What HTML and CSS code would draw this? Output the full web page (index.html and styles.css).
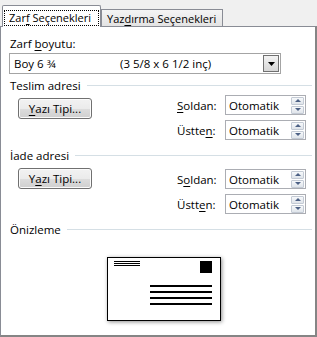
FILE: index.html
```html
<!DOCTYPE html>
<html lang="tr">
    <head>
        <meta charset="UTF-8">
        <meta name="viewport" content="width=device-width, initial-scale=1.0">
        <title>Zarflar</title>
        <link rel="stylesheet" href="styles.css">
    </head>
    <body>

        <div class="dialog">
            <div class="tabs">
                <div class="tab active"><span class="focus">Zar<u>f</u> Seçenekleri</span></div>
                <div class="tab">Yaz<u>d</u>ırma Seçenekleri</div>
            </div>

            <div class="panel">
                <div class="label">Zarf <u>b</u>oyutu:</div>
                <div class="select">
                    <span class="selName">Boy 6 ¾</span>
                    <span class="selSize">(3 5/8 x 6 1/2 inç)</span>
                    <span class="drop">
                        <svg width="7" height="4" viewBox="0 0 7 4"><path d="M0 0h7L3.5 4z" fill="#000"/></svg>
                    </span>
                </div>

                <!-- teslim adresi -->
                <div class="groupTitle"><span>Teslim adresi</span><span class="rule"></span></div>
                <div class="groupRow">
                    <button type="button" class="btn"><u>Y</u>azı Tipi...</button>
                    <div class="offsets">
                        <span><u>S</u>oldan:</span>
                        <div class="spin"><span class="val">Otomatik</span><span class="arrows"><i class="up"></i><i class="down"></i></span></div>
                        <span>Üstte<u>n</u>:</span>
                        <div class="spin"><span class="val">Otomatik</span><span class="arrows"><i class="up"></i><i class="down"></i></span></div>
                    </div>
                </div>

                <!-- iade adresi -->
                <div class="groupTitle second"><span>İade adresi</span><span class="rule"></span></div>
                <div class="groupRow second">
                    <button type="button" class="btn">Y<u>a</u>zı Tipi...</button>
                    <div class="offsets">
                        <span>S<u>o</u>ldan:</span>
                        <div class="spin"><span class="val">Otomatik</span><span class="arrows"><i class="up"></i><i class="down"></i></span></div>
                        <span>Üstt<u>e</u>n:</span>
                        <div class="spin"><span class="val">Otomatik</span><span class="arrows"><i class="up"></i><i class="down"></i></span></div>
                    </div>
                </div>

                <!-- onizleme -->
                <div class="groupTitle second"><span>Önizleme</span><span class="rule"></span></div>
                <div class="preview">
                    <div class="envelope">
                        <div class="envTop">
                            <div class="returnLines"><b></b><b></b><b></b></div>
                            <div class="stamp"></div>
                        </div>
                        <div class="addressLines"><b></b><b></b><b></b><b></b></div>
                    </div>
                </div>
            </div>
        </div>

    </body>
</html>
```

FILE: styles.css
```css
* {
    box-sizing: border-box;
}

body {
    margin: 0;
    background-color: #f0f0f0;
    font-family: "Open Sans", "Noto Sans", Arial, sans-serif;
    font-size: 11.5px;
    color: #000;
}

u {
    text-underline-offset: 2px;
}

.dialog {
    width: 317px;
    height: 337px;
    display: flex;
    flex-direction: column;
}

/* sekmeler */
.tabs {
    height: 26px;
    display: flex;
    align-items: flex-end;
    padding-left: 2px;
    font-size: 11px;
}

.tab {
    width: 122px;
    height: 17px;
    border: 1px solid #898c95;
    border-bottom: none;
    background: linear-gradient(#f4f4f4, #e3e3e3);
    display: flex;
    align-items: center;
    padding-left: 5px;
    line-height: 15px;
    white-space: nowrap;
}

.tab.active {
    width: 99px;
    height: 22px;
    margin-bottom: -1px;
    align-items: flex-start;
    padding: 4px 0 0 1px;
    background: #fff;
    border-radius: 2px 2px 0 0;
    position: relative;
    z-index: 1;
}

.focus {
    display: block;
    height: 16px;
    width: 95px;
    border: 1px dotted #000;
    padding-left: 4px;
    line-height: 14px;
    white-space: nowrap;
}

/* panel */
.panel {
    flex: 1;
    background-color: #fff;
    border: 1px solid #898c95;
    border-right: 2px solid #858585;
    border-bottom: 2px solid #858585;
    padding: 9px 8px 0 9px;
}

.label {
    line-height: 16px;
}

.select {
    display: flex;
    align-items: center;
    width: 272px;
    height: 21px;
    margin: 1px 0 0 -1px;
    border: 1px solid #a4a4a4;
    padding: 1px 1px 1px 4px;
}

.selName {
    width: 106px;
}

.selSize {
    flex: 1;
}

.drop {
    width: 16px;
    height: 17px;
    border: 1px solid #707070;
    background: linear-gradient(#f3f3f3, #d6d6d6);
    display: flex;
    align-items: center;
    justify-content: center;
}

.groupTitle {
    display: flex;
    align-items: center;
    height: 16px;
    margin: 3px -5px 0 0;
}

.groupTitle.second {
    margin-top: 7px;
}

.rule {
    flex: 1;
    height: 1px;
    margin-left: 6px;
    background-color: #d5dfe5;
}

.groupRow {
    display: flex;
    justify-content: space-between;
    align-items: flex-start;
    margin-top: 2px;
    padding-right: 1px;
}

.groupRow.second {
    margin-top: 6px;
}

.btn {
    width: 74px;
    height: 21px;
    margin: 3px 0 0 8px;
    padding: 0;
    font: inherit;
    color: #000;
    border: 1px solid #707070;
    border-radius: 3px;
    background: linear-gradient(#f2f2f2 0%, #ebebeb 50%, #dddddd 50%, #cfcfcf 100%);
    box-shadow: inset 0 0 0 1px #fbfbfb;
}

.groupRow.second .btn {
    margin-top: -1px;
}

.offsets {
    display: grid;
    grid-template-columns: 48px 81px;
    row-gap: 5px;
    align-items: center;
}

.spin {
    display: flex;
    align-items: center;
    height: 20px;
    border: 1px solid #abadb3;
    padding: 0 1px 0 3px;
}

.val {
    flex: 1;
}

.arrows {
    display: flex;
    flex-direction: column;
    gap: 1px;
    width: 13px;
}

.arrows i {
    height: 8px;
    border: 1px solid #c3cad4;
    border-radius: 1px;
    background: linear-gradient(#f7f9fb, #dfe4ea);
    position: relative;
}

.arrows i::after {
    content: "";
    position: absolute;
    left: 3px;
    top: 1px;
    border-left: 3px solid transparent;
    border-right: 3px solid transparent;
}

.arrows .up::after {
    border-bottom: 3px solid #4d6185;
}

.arrows .down::after {
    border-top: 3px solid #4d6185;
}

/* onizleme */
.preview {
    display: flex;
    margin-top: 20px;
    padding-left: 97px;
}

.envelope {
    width: 114px;
    height: 64px;
    border: 1px solid #000;
    background-color: #fff;
    box-shadow: 1px 1px 4px rgba(0, 0, 0, 0.45);
    padding: 3px 8px 0 6px;
}

.envTop {
    display: flex;
    justify-content: space-between;
}

.returnLines {
    width: 26px;
    display: flex;
    flex-direction: column;
    gap: 1px;
}

.returnLines b {
    height: 1px;
    background-color: #000;
}

.stamp {
    width: 12px;
    height: 12px;
    background-color: #000;
}

.addressLines {
    width: 62px;
    margin: 12px 0 0 auto;
    display: flex;
    flex-direction: column;
    gap: 4px;
}

.addressLines b {
    height: 2px;
    background-color: #000;
}
```
